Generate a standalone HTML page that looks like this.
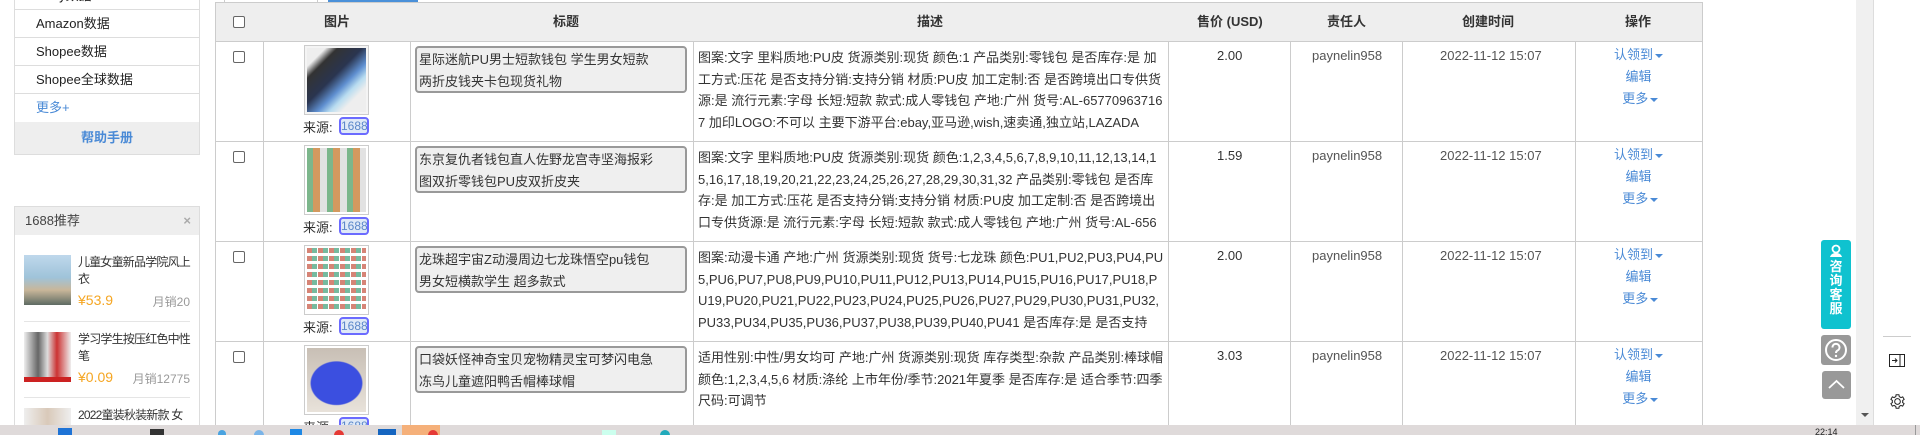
<!DOCTYPE html>
<html style="overflow:hidden;height:435px"><head><meta charset="utf-8">
<style>
*{margin:0;padding:0;box-sizing:border-box}
body{width:1920px;height:435px;overflow:hidden;background:#fff;font-family:"Liberation Sans","Noto Sans CJK SC",sans-serif;font-size:13px;color:#333;position:relative}
.a{position:absolute}
.it{position:absolute;left:14px;width:186px;height:28px;border-bottom:1px solid #ddd;padding-left:22px;line-height:27px;font-size:13px;color:#222}
.vl{position:absolute;top:41px;width:1px;height:384px;background:#ccc}
.hr{position:absolute;left:215px;width:1488px;height:1px;background:#ccc}
.th{position:absolute;top:13px;line-height:18px;font-weight:bold;color:#333;font-size:13px;white-space:nowrap}
.cb{position:absolute;width:12px;height:12px;border:1px solid #666;border-radius:2px;background:#fff}
.img{position:absolute;left:304px;width:65px;height:70px;border:1px solid #ccc;padding:2px}
.src{position:absolute;left:303px;font-size:13px;color:#333}
.bd{position:absolute;left:339px;width:30px;height:18px;border:2px solid #6b6bff;border-radius:4px;background:#dfe9f7;color:#5b87c9;font-size:12px;line-height:14px;text-align:center}
.tt{position:absolute;left:415px;width:272px;height:47px;border:2px solid #999;border-radius:4px;background:#efefef;padding:1px 2px;line-height:22px;font-size:13px;color:#333;white-space:nowrap;overflow:hidden}
.ds{position:absolute;left:698px;width:466px;line-height:21.7px;font-size:13px;color:#333;word-break:break-all;height:95px;overflow:hidden}
.c{position:absolute;font-size:13px;line-height:21px;white-space:nowrap}
.op{position:absolute;left:1575px;width:127px;text-align:center;color:#4a8ad6;font-size:13px;line-height:22px}
.car{display:inline-block;width:0;height:0;border-left:4px solid transparent;border-right:4px solid transparent;border-top:4px solid #4a8ad6;vertical-align:middle;margin-left:2px}
.rt{position:absolute;left:78px;width:116px;line-height:17px;color:#333;font-size:12px;letter-spacing:-0.8px}
</style></head><body>

<div class="a" style="left:14px;top:0;width:186px;height:155px;border:1px solid #ddd;border-top:none"></div>
<div class="it" style="top:-18px">eBay数据</div>
<div class="it" style="top:10px">Amazon数据</div>
<div class="it" style="top:38px">Shopee数据</div>
<div class="it" style="top:66px">Shopee全球数据</div>
<div class="it" style="top:94px;color:#4a8ad6;border-bottom:none">更多+</div>
<div class="a" style="left:15px;top:122px;width:184px;height:32px;background:#eee;color:#4a8ad6;font-weight:bold;text-align:center;line-height:32px">帮助手册</div>

<div class="a" style="left:14px;top:206px;width:186px;height:229px;border:1px solid #ddd;border-bottom:none"></div>
<div class="a" style="left:15px;top:207px;width:184px;height:28px;background:#eee;line-height:28px;padding-left:10px;color:#444">1688推荐<span style="position:absolute;right:8px;color:#aaa;font-weight:bold">×</span></div>
<div class="a" style="left:24px;top:255px;width:47px;height:50px;background:linear-gradient(#bfd8ec,#9fc3d9 45%,#c9b79a 70%,#5e6b63);"></div>
<div class="rt" style="top:254px">儿童女童新品学院风上衣</div>
<div class="a" style="left:78px;top:292px;color:#f5a623;font-size:14px">¥53.9</div>
<div class="a" style="left:150px;top:293px;color:#999;font-size:12px;width:40px;text-align:right">月销20</div>
<div class="a" style="left:24px;top:321px;width:166px;height:1px;background:#e5e5e5"></div>
<div class="a" style="left:24px;top:332px;width:47px;height:50px;background:linear-gradient(90deg,#eee,#666 30%,#ddd 50%,#c33 70%,#eee);border-bottom:5px solid #c22"></div>
<div class="rt" style="top:331px">学习学生按压红色中性笔</div>
<div class="a" style="left:78px;top:369px;color:#f5a623;font-size:14px">¥0.09</div>
<div class="a" style="left:130px;top:370px;color:#999;font-size:12px;width:60px;text-align:right">月销12775</div>
<div class="a" style="left:24px;top:397px;width:166px;height:1px;background:#e5e5e5"></div>
<div class="a" style="left:24px;top:408px;width:47px;height:17px;background:linear-gradient(90deg,#eee,#d9c9b9,#eee)"></div>
<div class="rt" style="top:407px;white-space:nowrap;overflow:hidden">2022童装秋装新款 女</div>

<div class="a" style="left:224px;top:0;width:1px;height:2px;background:#ccc"></div>
<div class="a" style="left:317px;top:0;width:1px;height:2px;background:#ccc"></div>
<div class="a" style="left:328px;top:0;width:90px;height:2px;background:#4a90d9"></div>

<div class="a" style="left:215px;top:2px;width:1488px;height:40px;background:#eee;border:1px solid #ccc"></div>
<div class="vl" style="left:215px"></div>
<div class="vl" style="left:263px"></div>
<div class="vl" style="left:410px"></div>
<div class="vl" style="left:693px"></div>
<div class="vl" style="left:1168px"></div>
<div class="vl" style="left:1290px"></div>
<div class="vl" style="left:1402px"></div>
<div class="vl" style="left:1575px"></div>
<div class="vl" style="left:1702px"></div>
<div class="hr" style="top:141px"></div>
<div class="hr" style="top:241px"></div>
<div class="hr" style="top:341px"></div>

<div class="cb" style="left:233px;top:16px"></div>
<div class="th" style="left:324px">图片</div>
<div class="th" style="left:553px">标题</div>
<div class="th" style="left:917px">描述</div>
<div class="th" style="left:1197px">售价 (USD)</div>
<div class="th" style="left:1327px">责任人</div>
<div class="th" style="left:1462px">创建时间</div>
<div class="th" style="left:1625px">操作</div>

<div class="cb" style="left:233px;top:51px"></div>
<div class="img" style="top:45px;background:#f4f4f4"><div style="width:100%;height:100%;background:linear-gradient(135deg,#eee 15%,#333 25%,#2a3550 45%,#5f8fd0 60%,#b8dcf0 70%,#eee 80%)"></div></div>
<div class="src" style="top:117px">来源:</div><div class="bd" style="top:117px">1688</div>
<div class="tt" style="top:46px">星际迷航PU男士短款钱包 学生男女短款<br>两折皮钱夹卡包现货礼物</div>
<div class="ds" style="top:47px">图案:文字 里料质地:PU皮 货源类别:现货 颜色:1 产品类别:零钱包 是否库存:是 加工方式:压花 是否支持分销:支持分销 材质:PU皮 加工定制:否 是否跨境出口专供货源:是 流行元素:字母 长短:短款 款式:成人零钱包 产地:广州 货号:AL-657709637167 加印LOGO:不可以 主要下游平台:ebay,亚马逊,wish,速卖通,独立站,LAZADA</div>
<div class="c" style="left:1217px;top:45px">2.00</div>
<div class="c" style="left:1312px;top:45px;color:#555">paynelin958</div>
<div class="c" style="left:1440px;top:45px;color:#555">2022-11-12 15:07</div>
<div class="op" style="top:44px">认领到<span class="car"></span><br>编辑<br>&nbsp;更多<span class="car"></span></div>

<div class="cb" style="left:233px;top:151px"></div>
<div class="img" style="top:145px"><div style="width:100%;height:100%;background:repeating-linear-gradient(90deg,#6a7 0 6px,#c84 6px 13px,#ddd 13px 20px),#999;opacity:.85"></div></div>
<div class="src" style="top:217px">来源:</div><div class="bd" style="top:217px">1688</div>
<div class="tt" style="top:146px">东京复仇者钱包直人佐野龙宫寺坚海报彩<br>图双折零钱包PU皮双折皮夹</div>
<div class="ds" style="top:147px">图案:文字 里料质地:PU皮 货源类别:现货 颜色:1,2,3,4,5,6,7,8,9,10,11,12,13,14,15,16,17,18,19,20,21,22,23,24,25,26,27,28,29,30,31,32 产品类别:零钱包 是否库存:是 加工方式:压花 是否支持分销:支持分销 材质:PU皮 加工定制:否 是否跨境出口专供货源:是 流行元素:字母 长短:短款 款式:成人零钱包 产地:广州 货号:AL-656</div>
<div class="c" style="left:1217px;top:145px">1.59</div>
<div class="c" style="left:1312px;top:145px;color:#555">paynelin958</div>
<div class="c" style="left:1440px;top:145px;color:#555">2022-11-12 15:07</div>
<div class="op" style="top:144px">认领到<span class="car"></span><br>编辑<br>&nbsp;更多<span class="car"></span></div>

<div class="cb" style="left:233px;top:251px"></div>
<div class="img" style="top:245px"><div style="width:100%;height:100%;background:repeating-linear-gradient(0deg,#fff 0 3px,transparent 3px 8px),repeating-linear-gradient(90deg,#c65 0 5px,#5a8 5px 10px,#fff 10px 11px);opacity:.8"></div></div>
<div class="src" style="top:317px">来源:</div><div class="bd" style="top:317px">1688</div>
<div class="tt" style="top:246px">龙珠超宇宙Z动漫周边七龙珠悟空pu钱包<br>男女短横款学生 超多款式</div>
<div class="ds" style="top:247px">图案:动漫卡通 产地:广州 货源类别:现货 货号:七龙珠 颜色:PU1,PU2,PU3,PU4,PU5,PU6,PU7,PU8,PU9,PU10,PU11,PU12,PU13,PU14,PU15,PU16,PU17,PU18,PU19,PU20,PU21,PU22,PU23,PU24,PU25,PU26,PU27,PU29,PU30,PU31,PU32,PU33,PU34,PU35,PU36,PU37,PU38,PU39,PU40,PU41 是否库存:是 是否支持</div>
<div class="c" style="left:1217px;top:245px">2.00</div>
<div class="c" style="left:1312px;top:245px;color:#555">paynelin958</div>
<div class="c" style="left:1440px;top:245px;color:#555">2022-11-12 15:07</div>
<div class="op" style="top:244px">认领到<span class="car"></span><br>编辑<br>&nbsp;更多<span class="car"></span></div>

<div class="cb" style="left:233px;top:351px"></div>
<div class="img" style="top:345px"><div style="width:100%;height:100%;background:radial-gradient(ellipse 45% 35% at 50% 55%,#3b4fe0 95%,transparent 100%),linear-gradient(#c8bfb5,#e8e2da)"></div></div>
<div class="src" style="top:417px">来源:</div><div class="bd" style="top:417px">1688</div>
<div class="tt" style="top:346px">口袋妖怪神奇宝贝宠物精灵宝可梦闪电急<br>冻鸟儿童遮阳鸭舌帽棒球帽</div>
<div class="ds" style="top:347px;height:78px">适用性别:中性/男女均可 产地:广州 货源类别:现货 库存类型:杂款 产品类别:棒球帽 颜色:1,2,3,4,5,6 材质:涤纶 上市年份/季节:2021年夏季 是否库存:是 适合季节:四季 尺码:可调节</div>
<div class="c" style="left:1217px;top:345px">3.03</div>
<div class="c" style="left:1312px;top:345px;color:#555">paynelin958</div>
<div class="c" style="left:1440px;top:345px;color:#555">2022-11-12 15:07</div>
<div class="op" style="top:344px">认领到<span class="car"></span><br>编辑<br>&nbsp;更多<span class="car"></span></div>

<div class="a" style="left:1821px;top:240px;width:30px;height:89px;background:#0fc2cf;border-radius:3px;color:#fff;text-align:center;font-size:13px;line-height:14px;font-weight:bold;padding-top:20px">咨<br>询<br>客<br>服
<svg style="position:absolute;left:8px;top:4px" width="14" height="14" viewBox="0 0 14 14"><circle cx="7" cy="5" r="3.5" fill="none" stroke="#fff" stroke-width="1.8"/><path d="M1 13c1-3 3-4 6-4s5 1 6 4z" fill="#fff"/></svg></div>
<div class="a" style="left:1821px;top:335px;width:30px;height:30px;background:#999;border-radius:3px">
<svg width="30" height="30" viewBox="0 0 30 30"><circle cx="15" cy="15" r="10" fill="none" stroke="#fff" stroke-width="2"/><path d="M11.5 12.5a3.5 3.5 0 1 1 5 3c-1.2.6-1.5 1.2-1.5 2.5" fill="none" stroke="#fff" stroke-width="2"/><circle cx="15" cy="21" r="1.2" fill="#fff"/></svg></div>
<div class="a" style="left:1822px;top:371px;width:29px;height:28px;background:#999;border-radius:3px">
<svg width="29" height="28" viewBox="0 0 29 28"><path d="M7 17l7.5-7 7.5 7" fill="none" stroke="#fff" stroke-width="1.8"/></svg></div>

<div class="a" style="left:1856px;top:0;width:17px;height:425px;background:#f0f0f0"></div>
<div class="a" style="left:1861px;top:413px;width:0;height:0;border-left:4px solid transparent;border-right:4px solid transparent;border-top:4px solid #555"></div>
<div class="a" style="left:1873px;top:0;width:1px;height:425px;background:#ddd"></div>
<div class="a" style="left:1883px;top:336px;width:28px;height:1px;background:#ccc"></div>
<svg class="a" style="left:1889px;top:354px" width="16" height="13" viewBox="0 0 16 13"><rect x="0.5" y="0.5" width="15" height="12" fill="none" stroke="#222"/><path d="M11 0.5v12M3 6.5h5M6 4.5l2 2-2 2" fill="none" stroke="#222"/></svg>
<svg class="a" style="left:1889px;top:393px" width="17" height="17" viewBox="0 0 24 24"><path d="M12 8a4 4 0 1 0 0 8 4 4 0 0 0 0-8zm7.4 4c0-.5 0-1-.1-1.4l2.1-1.6-2-3.5-2.5 1a7 7 0 0 0-2.4-1.4L14 2.5h-4l-.4 2.6a7 7 0 0 0-2.4 1.4l-2.5-1-2 3.5 2.1 1.6a7 7 0 0 0 0 2.8l-2.1 1.6 2 3.5 2.5-1a7 7 0 0 0 2.4 1.4l.4 2.6h4l.4-2.6a7 7 0 0 0 2.4-1.4l2.5 1 2-3.5-2.1-1.6c.1-.4.1-.9.1-1.4z" fill="none" stroke="#222" stroke-width="1.4"/></svg>

<div class="a" style="left:0;top:425px;width:1920px;height:10px;background:#dfdada;overflow:hidden">
<div class="a" style="left:58px;top:3px;width:14px;height:7px;background:#1e73d6"></div>
<div class="a" style="left:150px;top:4px;width:14px;height:6px;background:#333"></div>
<div class="a" style="left:218px;top:5px;width:8px;height:5px;background:#4aa3e0;border-radius:4px 4px 0 0"></div>
<div class="a" style="left:254px;top:5px;width:10px;height:5px;background:#7ab4e8;border-radius:5px 5px 0 0"></div>
<div class="a" style="left:290px;top:4px;width:12px;height:6px;background:#1e88e5"></div>
<div class="a" style="left:334px;top:5px;width:10px;height:5px;background:#e53935;border-radius:5px 5px 0 0"></div>
<div class="a" style="left:378px;top:4px;width:18px;height:6px;background:#1565c0"></div>
<div class="a" style="left:402px;top:0;width:38px;height:10px;background:#f5b07a"></div>
<div class="a" style="left:428px;top:5px;width:10px;height:5px;background:#e53935;border-radius:5px 5px 0 0"></div>
<div class="a" style="left:602px;top:5px;width:14px;height:5px;background:#cfe"></div>
<div class="a" style="left:660px;top:5px;width:10px;height:5px;background:#2ab;border-radius:5px 5px 0 0"></div>
<div class="a" style="left:1815px;top:3px;font-size:9px;color:#222;line-height:8px">22:14</div>
<div class="a" style="left:1915px;top:0;width:1px;height:10px;background:#999"></div>
</div>
</body></html>
